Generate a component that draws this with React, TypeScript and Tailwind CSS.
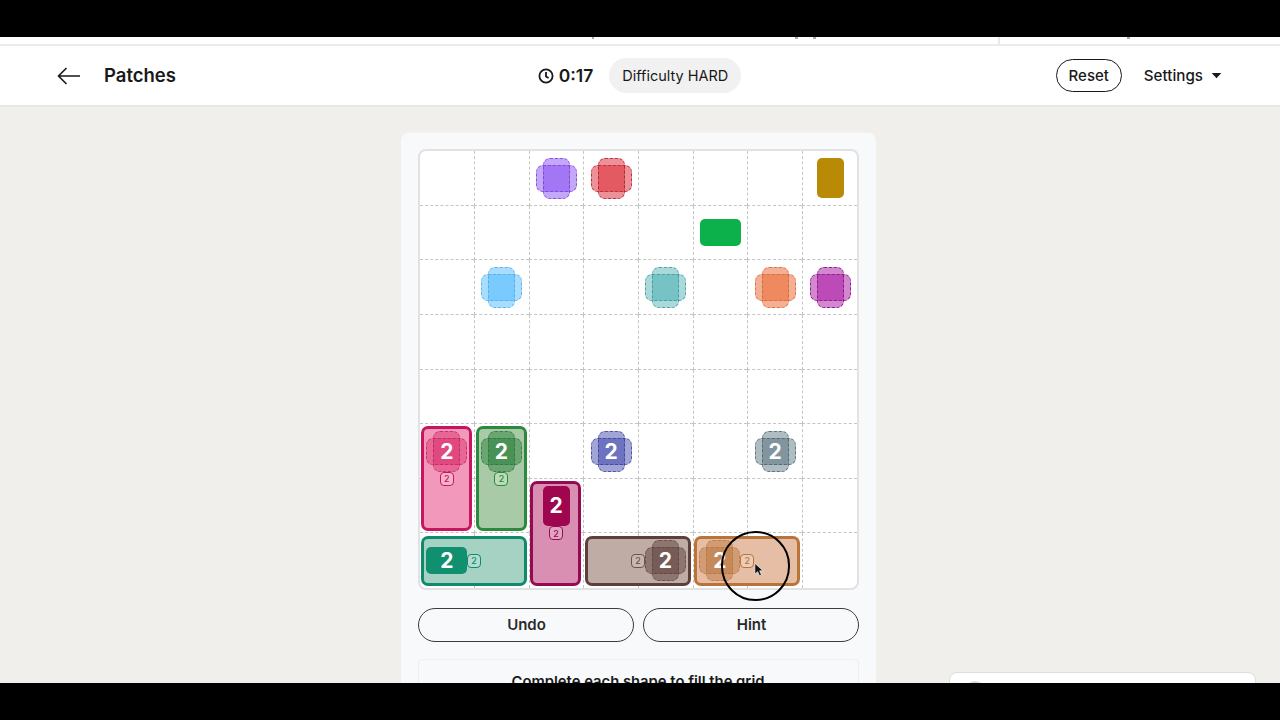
const font = { fontFamily: "Inter, 'Liberation Sans', sans-serif" };

type MarkerProps = {
  place: string;
  lobe: string;
  line: string;
  count?: boolean;
  badge?: "bottom" | "left" | "right";
  badgeTone?: string;
};

const Marker = ({ place, lobe, line, count, badge, badgeTone }: MarkerProps) => (
  <div className={`${place} relative flex items-center justify-center`}>
    <div className="relative w-[41px] h-[41px]">
      <div className={`absolute left-0 right-0 top-[7px] bottom-[7px] rounded-[7px] border border-dashed ${lobe} ${line}`} />
      <div className={`absolute top-0 bottom-0 left-[7px] right-[7px] rounded-[7px] border border-dashed ${lobe} ${line}`} />
      {count && (
        <div className="absolute inset-0 flex items-center justify-center text-[21px] font-bold text-white">2</div>
      )}
    </div>
    {badge && <Badge side={badge} tone={badgeTone ?? ""} />}
  </div>
);

const Badge = ({ side, tone }: { side: "bottom" | "left" | "right"; tone: string }) => {
  const spot =
    side === "bottom"
      ? "left-1/2 top-full -translate-x-1/2 -translate-y-1/2"
      : side === "right"
        ? "left-full top-1/2 -translate-x-1/2 -translate-y-1/2"
        : "right-full top-1/2 translate-x-1/2 -translate-y-1/2";
  return (
    <div
      className={`absolute ${spot} z-10 w-[14px] h-[14px] rounded-[4px] border flex items-center justify-center text-[9px] font-medium ${tone}`}
    >
      2
    </div>
  );
};

const Solid = ({ place, fill, size, count, badge, badgeTone }: {
  place: string;
  fill: string;
  size: string;
  count?: boolean;
  badge?: "bottom" | "right";
  badgeTone?: string;
}) => (
  <div className={`${place} relative flex items-center justify-center`}>
    <div className={`${size} ${fill} rounded-[5px] flex items-center justify-center text-[21px] font-bold text-white`}>
      {count ? "2" : null}
    </div>
    {badge && <Badge side={badge} tone={badgeTone ?? ""} />}
  </div>
);

const cells = Array.from({ length: 64 }, (_, i) => i);

const Board = () => (
  <div className="relative w-[441px] h-[441px] shrink-0 rounded-lg border-2 border-[#e2e1e3] bg-white overflow-hidden">
    <div className="grid grid-cols-8 grid-rows-8 w-full h-full">
      {cells.map((i) => (
        <div
          key={i}
          className={`border-dashed border-[#c6c5c5] ${i % 8 === 0 ? "" : "border-l"} ${i >= 56 ? "" : "border-b"}`}
        />
      ))}
    </div>

    {/* filled patches sit over the dashed cells */}
    <div className="absolute inset-0 grid grid-cols-8 grid-rows-8">
      <div className="col-start-1 row-start-6 col-span-1 row-span-2 ml-[1.5px] mr-[2px] my-[2px] rounded-[7px] border-[3px] border-[#c8155f] bg-[#f298bb]" />
      <div className="col-start-2 row-start-6 col-span-1 row-span-2 ml-[1.5px] mr-[2px] my-[2px] rounded-[7px] border-[3px] border-[#2b8a3e] bg-[#a9caa6]" />
      <div className="col-start-1 row-start-8 col-span-2 row-span-1 ml-[1.5px] mr-[2px] mt-[2.5px] mb-[2px] rounded-[7px] border-[3px] border-[#0f8a6c] bg-[#a5d2c3]" />
      <div className="col-start-3 row-start-7 col-span-1 row-span-2 ml-[1.5px] mr-[2px] my-[2px] rounded-[7px] border-[3px] border-[#960a52] bg-[#d98fb2]" />
      <div className="col-start-4 row-start-8 col-span-2 row-span-1 ml-[1.5px] mr-[2px] mt-[2.5px] mb-[2px] rounded-[7px] border-[3px] border-[#5e403b] bg-[#bfaca5]" />
      <div className="col-start-6 row-start-8 col-span-2 row-span-1 ml-[1.5px] mr-[2px] mt-[2.5px] mb-[2px] rounded-[7px] border-[3px] border-[#b9743a] bg-[#e6bea6]" />
    </div>

    <div className="absolute inset-0 grid grid-cols-8 grid-rows-8">
      <Marker place="col-start-3 row-start-1" lobe="bg-[#7c3bf2]/45" line="border-[#6a35c9]/70" />
      <Marker place="col-start-4 row-start-1 pl-px" lobe="bg-[#d9232f]/50" line="border-[#a3101d]/70" />
      <Solid place="col-start-8 row-start-1 pl-[2px]" fill="bg-[#b98a05]" size="w-[27px] h-[40px]" />
      <Solid place="col-start-6 row-start-2 pl-px" fill="bg-[#0db14b]" size="w-[41px] h-[27px]" />
      <Marker place="col-start-2 row-start-3" lobe="bg-[#3db3ff]/45" line="border-[#4aa3d8]/70" />
      <Marker place="col-start-5 row-start-3" lobe="bg-[#2b9fa3]/40" line="border-[#2f8a90]/70" />
      <Marker place="col-start-7 row-start-3 pl-px" lobe="bg-[#e9622a]/50" line="border-[#c9602f]/70" />
      <Marker place="col-start-8 row-start-3 pl-[2px]" lobe="bg-[#a5109f]/50" line="border-[#7d0f7a]/80" />
      <Marker place="col-start-4 row-start-6 pl-px" lobe="bg-[#2f37a5]/45" line="border-[#2d3590]/70" count />
      <Marker place="col-start-7 row-start-6 pl-px" lobe="bg-[#41606b]/42" line="border-[#3f5a63]/70" count />
      <Marker
        place="col-start-1 row-start-6"
        lobe="bg-[#d81b60]/40"
        line="border-[#b5224f]/70"
        count
        badge="bottom"
        badgeTone="border-[#c8155f] bg-[#f7b2cc] text-[#b5224f]"
      />
      <Marker
        place="col-start-2 row-start-6"
        lobe="bg-[#1f7a33]/45"
        line="border-[#2b6f38]/70"
        count
        badge="bottom"
        badgeTone="border-[#2b8a3e] bg-[#bddab9] text-[#2b8a3e]"
      />
      <Solid
        place="col-start-1 row-start-8"
        fill="bg-[#11906f]"
        size="w-[41px] h-[27px]"
        count
        badge="right"
        badgeTone="border-[#0f8a6c] bg-[#b5dcd0] text-[#0f8a6c]"
      />
      <Solid
        place="col-start-3 row-start-7"
        fill="bg-[#a00550]"
        size="w-[27px] h-[40px]"
        count
        badge="bottom"
        badgeTone="border-[#9c0a55] bg-[#e1a5c2] text-[#9c0a55]"
      />
      <Marker
        place="col-start-5 row-start-8"
        lobe="bg-[#5e403b]/50"
        line="border-[#5e403b]/70"
        count
        badge="left"
        badgeTone="border-[#6f514c] bg-[#c8b7b1] text-[#6f514c]"
      />
      <Marker
        place="col-start-6 row-start-8"
        lobe="bg-[#b9743a]/45"
        line="border-[#b9743a]/70"
        count
        badge="right"
        badgeTone="border-[#b9743a] bg-[#ecccb6] text-[#b9743a]"
      />
    </div>
  </div>
);

const App = () => {
  return (
    <div className="relative h-screen flex flex-col overflow-hidden bg-black text-[#191919]" style={font}>
      <div className="h-[37px] shrink-0 bg-black" />

      <div className="flex-1 min-h-0 flex flex-col overflow-hidden bg-[#f0efeb]">
        {/* bottom edge of the page above, mostly cropped away */}
        <div className="relative h-[9px] shrink-0 bg-white border-b-2 border-[#ebebeb] flex">
          <div className="ml-[998px] w-[2px] bg-[#e8e8e8]" />
          <span className="absolute left-[592px] top-0 w-[2px] h-[2px] bg-[#aaa]" />
          <span className="absolute left-[795px] top-0 w-[3px] h-[2px] bg-[#aaa]" />
          <span className="absolute left-[813px] top-0 w-[3px] h-[2px] bg-[#aaa]" />
          <span className="absolute left-[1127px] top-0 w-[3px] h-[2px] bg-[#aaa]" />
        </div>

        <header className="h-[61px] shrink-0 bg-white border-b-2 border-[#e9e8e5] flex items-center justify-between pl-[57px] pr-[58px]">
          <div className="flex items-center w-[400px]">
            <svg viewBox="0 0 24 18" className="w-6 h-[18px]" fill="none" stroke="#191919" strokeWidth="1.6">
              <path d="M23 9H1.5M9.5 1 1.5 9l8 8" />
            </svg>
            <h1 className="ml-[23px] pt-px text-[18.5px] font-semibold">Patches</h1>
          </div>

          <div className="flex items-center">
            <svg viewBox="0 0 16 16" className="w-4 h-4" fill="none" stroke="#191919" strokeWidth="1.8">
              <circle cx="8" cy="8" r="6.6" />
              <path d="M8 4v4.4l2.6 1.6" />
            </svg>
            <span className="ml-[5px] pt-px text-[17.5px] font-semibold">0:17</span>
            <div className="ml-[16px] h-[35px] w-[132px] pt-px rounded-full bg-[#f1f1f1] flex items-center justify-center text-[14.5px]">
              Difficulty HARD
            </div>
          </div>

          <div className="flex items-center justify-end w-[400px]">
            <button className="h-[33px] w-[66px] pt-px rounded-full border border-[#191919] text-[15px] font-medium bg-white">
              Reset
            </button>
            <span className="ml-[22px] pt-px text-[15.2px] font-medium">Settings</span>
            <svg viewBox="0 0 12 8" className="ml-[8px] w-[11px] h-[7px]" fill="#191919">
              <path d="M0.5 1h11L6 7z" />
            </svg>
          </div>
        </header>

        <main className="flex-1 min-h-0 flex justify-center pt-[25px] pr-[4px]">
          <section className="w-[475px] rounded-t-lg bg-[#f8f9fb] border-t border-[#f3f3f3] pt-[16px] px-[17px] flex flex-col items-stretch">
            <Board />
            <div className="mt-[18px] flex gap-[9px]">
              <button className="flex-1 h-[34px] pl-[2px] pt-px rounded-full border border-[#3c3c3c] text-[15px] font-semibold text-[#2a2a2a]">
                Undo
              </button>
              <button className="flex-1 h-[34px] pl-[2px] pt-px rounded-full border border-[#3c3c3c] text-[15px] font-semibold text-[#2a2a2a]">
                Hint
              </button>
            </div>
            <div className="mt-[17px] h-[60px] rounded-t-[4px] border border-[#eeeeee] pt-[11px] text-center text-[14.8px] font-semibold">
              Complete each shape to fill the grid
            </div>
          </section>
        </main>

        {/* messaging card peeking in at the bottom right */}
        <div className="absolute left-[949px] top-[672px] w-[307px] h-[20px] rounded-t-lg bg-white border border-[#dfdedb]">
          <div className="ml-[15px] mt-[8px] w-[20px] h-[20px] rounded-full bg-[#d9d9d9]" />
        </div>
      </div>

      <div className="relative h-[37px] shrink-0 bg-black z-20" />

      {/* screen recording cursor ring */}
      <div className="absolute left-[721px] top-[531px] w-[69px] h-[70px] rounded-full border-2 border-black z-10" />
      <svg viewBox="0 0 12 18" className="absolute left-[754px] top-[562px] w-[10px] h-[16px] z-10">
        <path d="M1 1v13l3.4-3 2.2 5 2.4-1-2.2-5H11z" fill="#111" stroke="#fff" strokeWidth="0.8" />
      </svg>
    </div>
  );
};

export default App;
